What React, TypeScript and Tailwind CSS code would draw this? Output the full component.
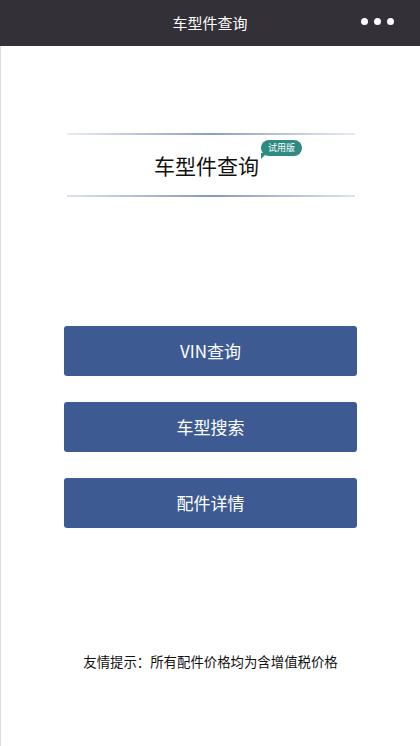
const font = { fontFamily: '"Noto Sans CJK SC", "Noto Sans", sans-serif' };

function Header() {
  return (
    <div className="relative flex h-[46px] items-center justify-center bg-[#333038]">
      <span className="text-[15px] text-white">车型件查询</span>
      <div className="absolute right-[26px] top-[18px] flex gap-[6px]">
        <span className="h-[7px] w-[7px] rounded-full bg-white" />
        <span className="h-[7px] w-[7px] rounded-full bg-white" />
        <span className="h-[7px] w-[7px] rounded-full bg-white" />
      </div>
    </div>
  );
}

function Logo() {
  return (
    <div className="mx-auto mt-[87px] w-[288px]">
      <div className="h-[2px] bg-gradient-to-r from-[#e8ecf4] via-[#8c9dc5] to-[#e8ecf4]" />
      <div className="flex h-[60px] items-center justify-center">
        <div className="relative mr-[8px] mt-[2px]">
          <span className="text-[21px] text-[#111]">车型件查询</span>
          <span className="absolute -top-[10px] left-[107px] whitespace-nowrap rounded-full bg-[#2f8a80] px-[7px] text-[9px] leading-[16px] text-white">
            试用版
            <span className="absolute -bottom-[3px] left-[0px] h-0 w-0 border-r-[6px] border-t-[6px] border-r-transparent border-t-[#2f8a80]" />
          </span>
        </div>
      </div>
      <div className="h-[2px] bg-gradient-to-r from-[#dde3ee] via-[#8799c2] to-[#dde3ee]" />
    </div>
  );
}

function MenuButton({ label }: { label: string }) {
  return (
    <button className="flex h-[50px] w-full items-center justify-center rounded-[3px] bg-[#3d5b92] text-[17px] text-white">
      {label}
    </button>
  );
}

export default function App() {
  return (
    <div className="flex h-[746px] flex-col bg-white" style={font}>
      <Header />
      <div className="flex flex-1 flex-col border-l border-[#ddd]">
        <Logo />
        <div className="mx-auto mt-[129px] flex w-[293px] flex-col gap-[26px]">
          <MenuButton label="VIN查询" />
          <MenuButton label="车型搜索" />
          <MenuButton label="配件详情" />
        </div>
        <p className="mt-[123px] text-center text-[13.4px] text-[#111]">
          友情提示：所有配件价格均为含增值税价格
        </p>
      </div>
    </div>
  );
}
